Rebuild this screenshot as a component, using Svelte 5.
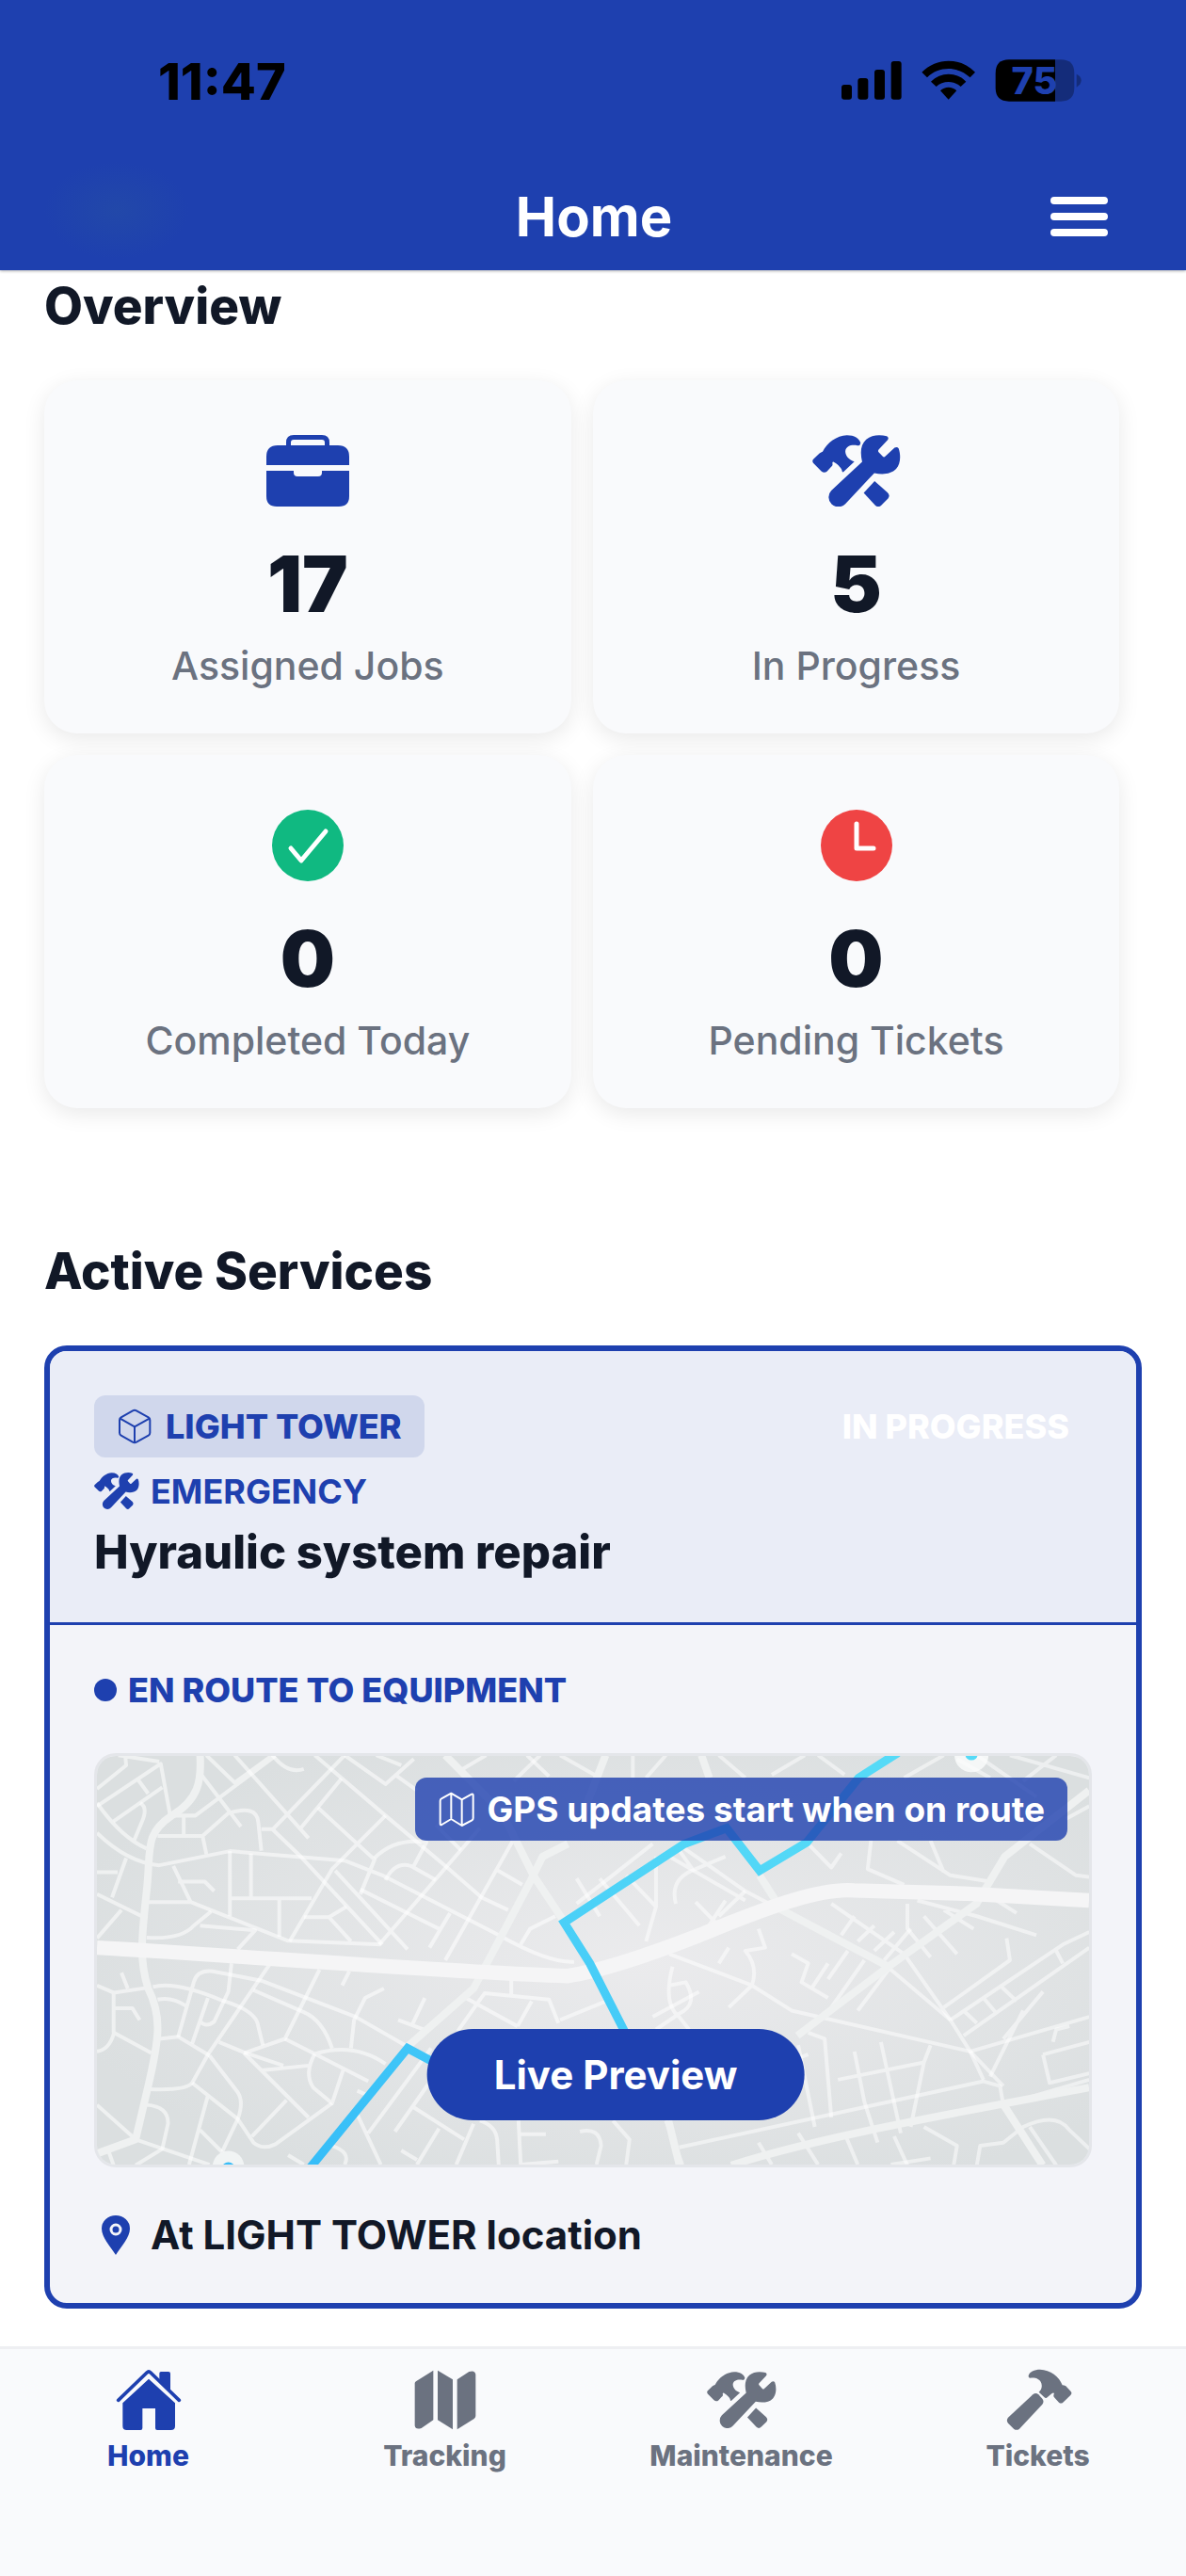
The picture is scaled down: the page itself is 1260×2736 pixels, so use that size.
<script>
  let activeTab = $state("Home");

  const stats = [
    { icon: "briefcase", value: 17, label: "Assigned Jobs" },
    { icon: "construct", value: 5, label: "In Progress" },
    { icon: "check", value: 0, label: "Completed Today" },
    { icon: "clock", value: 0, label: "Pending Tickets" }
  ];

  const tabs = [
    { icon: "home", label: "Home" },
    { icon: "map", label: "Tracking" },
    { icon: "construct", label: "Maintenance" },
    { icon: "hammer", label: "Tickets" }
  ];

  // side streets, west half
  const streetsWest = [
    "M42 155 L135 80 L132 48 M110 48 L240 68 M42 210 L245 75 L275 240 M170 122 L205 170 M95 258 L250 150",
    "M42 200 Q120 310 200 345 M180 200 Q205 215 185 260 L160 320 M42 295 Q140 390 240 398 L465 353 L830 383",
    "M390 48 L480 135 L600 48 M370 105 L500 275 M280 240 H355 L610 50 M318 240 V300 M235 305 H378 L460 232 Q550 205 555 260 L565 352 M378 305 L390 362",
    "M480 48 L715 312 M600 48 Q650 110 700 92 M600 285 L830 48 M690 280 L820 122 M565 283 H600 L690 370 L950 650",
    "M735 48 L960 240 L1150 400 L1265 500 L1350 540 M830 48 L960 140 L1050 60 M990 110 L1060 160 M930 48 L1010 80",
    "M745 215 L925 380 L880 490 M960 240 L790 410 L655 640 M830 383 L950 430 L1320 620 Q1480 710 1560 705",
    "M925 375 Q990 310 1090 325 L1050 400 M960 445 Q990 385 1040 400 L1120 445 M880 475 L1130 600 M1100 660 L1165 550",
    "M800 415 L1030 665 M940 650 L1260 280 M465 353 V560 M532 360 V500 M465 503 H725 M622 503 V625",
    "M700 563 H780 L835 530 M780 563 L850 640 M285 400 L340 515 M300 450 H385 L415 480 M205 515 H340 L650 638 L945 650",
    "M200 628 Q310 635 350 590 L405 545 M370 590 L545 605 L490 665 M42 490 L195 565 M42 630 L120 540 M42 420 H108 M90 500 L135 375",
    "M1365 320 L1150 700 M1310 410 L1395 460 M1390 650 L1420 600 L1500 560 M1200 350 L1120 270",
    "M42 780 L95 803 L200 788 M120 740 L140 790 M95 803 V930 L215 995 M95 853 H155 L178 890 M95 935 Q80 985 42 990",
    "M220 785 Q290 765 440 828 Q550 860 555 910 L570 970 M235 825 Q280 815 325 845 M300 945 L350 770 Q360 730 410 735 L565 765 L865 880 L1030 975",
    "M470 710 L460 800 L415 895 Q390 915 370 895 M345 965 L395 820 M590 715 L395 1000 L345 1090 Q325 1115 210 1110 M750 730 L640 950 L510 995",
    "M845 735 L822 780 M540 795 L700 865 Q760 890 790 980 M955 790 L895 820 L860 890 L850 980 M240 950 L300 943 L400 1003",
    "M400 1003 L490 1120 Q510 1150 490 1205 L440 1310 M430 960 L510 993 L635 1035 M640 950 L735 998 L905 1085 M735 998 Q860 960 960 1030",
    "M735 998 Q700 1060 730 1105 L790 1155 L825 1050 M565 1050 L715 1035 M510 995 L715 1200 M535 1260 L645 1145",
    "M345 1090 L490 1205 L540 1280 Q570 1305 610 1285 L790 1155 M395 1130 L335 1350 M370 1240 L440 1310 M200 1160 Q270 1165 268 1220 L250 1300 L165 1352",
    "M42 1160 L165 1270 L400 1350 M80 1310 L95 1352 M650 1320 L700 1350 M870 1115 L915 1135 M870 1190 L945 1350 M790 1290 Q850 1310 830 1350",
    "M1215 820 L1380 910 M1190 925 L1275 805 L1480 825 L1510 900 M1360 755 V810 M1380 910 L1425 830 M1085 820 L1045 905 M1000 890 L1080 920",
    "M1105 980 L905 1250 M1120 1060 L990 1245 M1045 1165 L1210 1270 M1130 1235 L1060 1350 M1240 1220 L1185 1350 M1010 1305 L1060 1335",
    "M1260 1210 Q1310 1225 1315 1270 L1320 1350 M1383 1210 L1390 1350 L1510 1340 M1390 1253 H1470 M1150 48 L1200 95 L1280 48 M1410 48 L1480 115"
  ];

  // side streets, east half, drawn on a wider grid
  const streetsEast = [
    "M690 48 L650 130 M720 48 L780 120 M830 48 V120 M880 48 L850 120 M960 48 L1000 120 M1040 110 L1090 48 M1110 48 L1150 110",
    "M1240 120 L1300 48 M1320 60 L1370 120 M1350 48 L1440 180 M1400 48 L1520 120 M1420 130 L1470 48 M1485 250 L1520 210",
    "M745 440 L780 560 M780 440 L840 590 M820 430 L865 530 L850 640 M865 530 V370 M895 520 Q885 440 925 410 L970 370 M905 340 L1000 480 L1045 530",
    "M885 370 L1000 510 M970 510 L945 590 M925 515 L955 580 M920 410 L900 350 M1000 480 L960 560 M860 330 L745 520",
    "M1095 330 L1130 405 L1145 360 M1190 320 L1185 410 L1240 460 M1230 320 L1310 430 L1370 450 M1280 320 L1300 420 M1430 330 L1500 430 L1520 435",
    "M1130 520 L1240 680 L1310 890 L1340 990 L1390 1100 M1165 560 L1145 620 M1195 590 L1170 640 M1225 610 L1195 670 M1250 600 L1210 700",
    "M1245 520 V600 L1280 690 M1270 560 L1320 680 M1300 540 L1345 600 M1260 510 L1350 560 L1440 620 M1380 510 L1410 550",
    "M885 680 L1010 780 L1070 860 L1340 990 L1520 880 M975 850 L1010 780 Q1020 720 1000 670 L1030 660 L1020 600 M975 660 L960 710",
    "M890 720 Q875 840 900 880 L915 920 M885 780 L910 770 Q930 840 900 870 L865 920 M1070 680 L1095 710 L1085 770 L1125 820 M1125 710 L1100 790",
    "M1155 670 L1125 760 M1180 700 L1130 850 M1220 720 L1170 860 M1220 730 L1310 890 M1300 850 L1400 700 L1395 630",
    "M1310 890 L1480 650 L1520 610 M1330 940 L1520 660 M1350 900 L1330 860 M1380 870 L1360 820 M1410 830 L1385 780 M1470 670 L1480 710",
    "M1370 1070 L1420 860 M1390 950 L1450 800 M1340 990 L1360 1080 M1450 1000 L1460 1090 L1520 1060 M1450 1000 L1520 960 M1465 960 L1470 920 L1490 910",
    "M1095 930 L1120 950 L1130 1200 M1080 970 L1105 1230 M1165 990 L1180 1150 L1200 1280 M1205 960 L1235 1250 M1140 1080 L1270 1025 L1250 1230 M1270 1025 L1280 970",
    "M900 1295 L1360 1085 L1385 1100 L1390 1160 M1015 1060 L1095 1000 M1390 1160 L1520 1080 M1270 1230 L1320 1290 L1315 1352 M1225 1260 L1245 1352",
    "M1350 1352 L1355 1290 L1390 1280 L1420 1230 Q1470 1180 1490 1240 L1520 1300 M1430 1230 L1470 1352 M750 1245 Q780 1230 782 1290 L775 1350 M800 1210 L825 1270 L820 1350",
    "M1020 1280 L1040 1350 M1080 1250 L1110 1350 M1150 1250 L1170 1350 M1220 1350 L1280 1330 M880 1210 L905 1350 M720 890 L790 830 M860 880 L930 800"
  ];
</script>

<style>
  :global(body) {
    margin: 0;
    background: #fff;
  }

  .app {
    font-family: Inter, "Liberation Sans", sans-serif;
    color: #111827;
    min-height: 100vh;
    display: flex;
    flex-direction: column;
  }

  h1, h2, h3 {
    margin: 0;
  }

  button {
    font-family: inherit;
    border: none;
    padding: 0;
    cursor: pointer;
  }

  svg {
    display: block;
    flex: none;
  }

  header {
    background: #1e40af;
    box-shadow: 0 1px 3px rgba(0, 0, 0, 0.3);
  }

  .status {
    height: 172px;
    padding: 0 110px 0 168px;
    display: flex;
    align-items: center;
    justify-content: space-between;
    color: #000;
    font-size: 54px;
    font-weight: 800;
  }

  .status-icons {
    width: 256px;
    height: 46px;
  }

  .titlebar {
    height: 115px;
    display: grid;
    grid-template-columns: 1fr auto 1fr;
    align-items: center;
    padding: 0 80px 0 47px;
  }

  .glow {
    width: 192px;
    height: 115px;
    background: radial-gradient(closest-side at 40% 45%, #2248a9, #1e40af);
  }

  h1 {
    color: #fff;
    font-size: 58px;
    line-height: 68px;
    font-weight: 700;
    padding-left: 35px;
  }

  .menu {
    justify-self: end;
    background: none;
  }

  main {
    flex: 1;
    padding: 7px 47px 39px;
  }

  h2 {
    font-size: 53px;
    line-height: 63px;
    font-weight: 800;
  }

  .stats {
    display: grid;
    grid-template-columns: 48% 48%;
    gap: 23px;
    padding: 47px 0 142px;
  }

  .stat {
    background: #f9fafc;
    border-radius: 35px;
    box-shadow: 0 6px 23px rgba(0, 0, 0, 0.09);
    padding: 49px 24px 47px;
    display: flex;
    flex-direction: column;
    align-items: center;
  }

  .stat .icon {
    height: 94px;
    display: flex;
    align-items: center;
    color: #1e40af;
  }

  .value {
    font-size: 82px;
    line-height: 98px;
    font-weight: 900;
    margin: 25px 0 12px;
  }

  .label {
    font-size: 41px;
    line-height: 50px;
    font-weight: 500;
    color: #6b7280;
  }

  .service {
    margin-top: 47px;
    border: 6px solid #1e40af;
    border-radius: 24px;
    background: #f3f4f9;
    overflow: hidden;
  }

  .service-head {
    background: #eaedf7;
    border-bottom: 3px solid #1e40af;
    padding: 47px 47px 45px;
  }

  .row {
    display: flex;
    align-items: center;
    justify-content: space-between;
  }

  .tag {
    display: flex;
    align-items: center;
    gap: 14px;
    height: 66px;
    padding: 0 24px;
    border-radius: 12px;
    background: #d0d7ec;
  }

  .tag,
  .state,
  .kind,
  .phase {
    font-size: 36px;
    line-height: 48px;
    font-weight: 700;
    color: #1e40af;
  }

  .tag,
  .state,
  .phase {
    font-weight: 800;
  }

  .state {
    color: #fff;
    padding-right: 24px;
  }

  .kind {
    display: flex;
    align-items: center;
    gap: 12px;
    margin: 12px 0;
  }

  h3 {
    font-size: 49px;
    line-height: 58px;
    font-weight: 800;
  }

  .service-body {
    padding: 45px 47px 42px;
  }

  .phase {
    display: flex;
    align-items: center;
    gap: 12px;
  }

  .dot {
    width: 24px;
    height: 24px;
    border-radius: 50%;
    background: #1e40af;
  }

  .map {
    position: relative;
    margin: 43px 0 42px;
    border: 3px solid #e4e6ea;
    border-radius: 23px;
    overflow: hidden;
  }

  .map > svg {
    width: 100%;
    height: 434px;
  }

  .gps {
    position: absolute;
    top: 23px;
    right: 23px;
    height: 67px;
    padding: 0 24px;
    display: flex;
    align-items: center;
    gap: 12px;
    border-radius: 12px;
    background: rgba(30, 64, 175, 0.8);
    color: #fff;
    font-size: 37px;
    font-weight: 700;
  }

  .preview {
    position: absolute;
    bottom: 47px;
    left: 50%;
    transform: translateX(-44%);
    height: 97px;
    padding: 0 71px;
    border-radius: 49px;
    background: #1e40af;
    color: #fff;
    font-size: 42px;
    font-weight: 700;
    white-space: nowrap;
  }

  .location {
    display: flex;
    align-items: center;
    gap: 12px;
    font-size: 42px;
    line-height: 60px;
    font-weight: 700;
  }

  nav {
    height: 222px;
    padding-top: 19px;
    border-top: 3px solid #eeeff2;
    background: #f9fafc;
    display: grid;
    grid-template-columns: repeat(4, 1fr);
    align-items: start;
  }

  .tab {
    display: flex;
    flex-direction: column;
    align-items: center;
    gap: 6px;
    background: none;
    color: #6b7280;
    font-size: 30px;
    line-height: 36px;
    font-weight: 800;
  }

  .tab.active {
    color: #1e40af;
  }

  .tab .icon {
    height: 70px;
    display: flex;
    align-items: center;
  }
</style>

{#snippet construct(width)}
  <svg {width} viewBox="127 94 284 232" fill="currentColor" aria-hidden="true">
    <path d="M287 180C280 150 282 125 300 108C318 93 345 92 366 98Q374 103 369 110L340 141Q337 145 340 149L353 163Q357 167 361 163L391 135Q399 130 404 137C412 160 410 188 396 203C380 220 352 222 326 216L233 315A31 31 0 0 1 188 272Z" />
    <path d="M327 242L368 278Q378 288 370 298L349 319Q339 329 329 320L292 280Z" />
    <path d="M160 148C175 118 205 97 238 95C262 95 278 105 282 120Q281 129 272 128C255 124 235 128 233 146C233 160 245 175 262 179L226 213Q222 213 222 207C220 198 203 184 195 180Q190 180 192 187Q193 193 187 197L174 211Q165 218 156 210L130 184Q125 177 131 171L150 153Q155 150 160 148Z" />
  </svg>
{/snippet}

{#snippet icon(name)}
  {#if name === "briefcase"}
    <svg width="94" height="94" viewBox="0 0 94 94" fill="currentColor" aria-hidden="true">
      <path d="M3 41V32Q3 20 15 20H24V17Q24 9 32 9H62Q70 9 70 17V20H79Q91 20 91 32V41ZM29 20H65V17Q65 14 62 14H32Q29 14 29 17Z" />
      <path d="M3 47H32V49Q32 53 36 53H58Q62 53 62 49V47H91V74Q91 85 80 85H14Q3 85 3 74Z" />
    </svg>
  {:else if name === "check"}
    <svg width="94" height="94" viewBox="0 0 94 94" aria-hidden="true">
      <circle cx="47" cy="47" r="38" fill="#10b981" />
      <path d="M29 50L40 63L66 32" fill="none" stroke="#fff" stroke-width="5" stroke-linecap="round" stroke-linejoin="round" />
    </svg>
  {:else if name === "clock"}
    <svg width="94" height="94" viewBox="0 0 94 94" aria-hidden="true">
      <circle cx="47" cy="47" r="38" fill="#ef4444" />
      <path d="M47 24V50H65" fill="none" stroke="#fff" stroke-width="5" stroke-linecap="round" stroke-linejoin="round" />
    </svg>
  {:else if name === "home"}
    <svg width="70" height="70" viewBox="98 42 210 210" fill="currentColor" aria-hidden="true">
      <path d="M106 148L197 60Q203 54 209 60L300 148" fill="none" stroke="currentColor" stroke-width="11" stroke-linecap="round" />
      <path d="M237 62Q237 57 242 57H266Q272 57 272 63V116L237 82Z" />
      <path d="M203 80L287 157V230Q287 243 274 243H230Q224 243 224 237V174H183V237Q183 243 177 243H133Q120 243 120 230V157Z" />
    </svg>
  {:else if name === "map"}
    <svg width="70" height="70" viewBox="1045 42 210 210" fill="currentColor" aria-hidden="true">
      <path d="M1053 94Q1053 90 1058 87L1112 53V211L1074 237Q1055 243 1053 229Z" />
      <path d="M1126 53L1174 82V241L1126 211Z" />
      <path d="M1188 82L1226 57Q1245 51 1247 66V198Q1247 203 1242 207L1188 241Z" />
    </svg>
  {:else if name === "hammer"}
    <svg width="70" height="70" viewBox="1102 42 210 210" fill="currentColor" overflow="visible" aria-hidden="true">
      <path d="M1176 70C1178 57 1195 50 1213 50C1245 51 1275 73 1284 100Q1290 100 1295 103L1311 120Q1316 126 1310 132L1285 156Q1279 160 1273 155L1258 139Q1254 134 1258 126Q1255 123 1250 127L1234 140Q1230 142 1226 138L1209 122C1222 112 1222 88 1205 80C1198 76 1190 76 1182 77Q1175 77 1176 70Z" />
      <path d="M1190 130Q1199 122 1208 130L1220 143Q1227 152 1220 161L1147 239Q1138 246 1129 239L1111 221Q1104 212 1111 203Z" />
    </svg>
  {/if}
{/snippet}

<div class="app">
  <header>
    <div class="status">
      <span>11:47</span>
      <svg class="status-icons" viewBox="104 66 768 138" aria-label="Battery 75 percent">
        <rect x="104" y="147" width="33" height="47" rx="9" />
        <rect x="156" y="126" width="33" height="68" rx="9" />
        <rect x="209" y="99" width="33" height="95" rx="9" />
        <rect x="262" y="72" width="33" height="122" rx="9" />
        <path d="M360 107C407 59 483 59 530 107L514 124C476 87 414 87 377 124Z" />
        <path d="M389 137C420 105 470 105 501 137L484 153C463 133 427 133 406 153Z" />
        <path d="M419 166C433 152 457 152 471 166L445 194Z" />
        <path d="M785 67H803Q846 67 846 110V157Q846 200 803 200H785Z" opacity="0.3" />
        <path d="M853 113Q868 120 868 133Q868 147 853 155Z" opacity="0.3" />
        <path d="M785 67H638Q595 67 595 110V157Q595 200 638 200H785Z" />
        <text x="719" y="177" text-anchor="middle" font-size="119" font-weight="800" fill="#1e40af">75</text>
      </svg>
    </div>
    <div class="titlebar">
      <div class="glow"></div>
      <h1>Home</h1>
      <button class="menu" aria-label="Menu">
        <svg width="64" height="46" viewBox="0 0 64 46" stroke="#fff" stroke-width="8" stroke-linecap="round">
          <path d="M4 6H57M4 23H57M4 40H57" />
        </svg>
      </button>
    </div>
  </header>

  <main>
    <h2>Overview</h2>
    <div class="stats">
      {#each stats as stat}
        <div class="stat">
          <div class="icon">
            {#if stat.icon === "construct"}
              {@render construct(94)}
            {:else}
              {@render icon(stat.icon)}
            {/if}
          </div>
          <div class="value">{stat.value}</div>
          <div class="label">{stat.label}</div>
        </div>
      {/each}
    </div>

    <h2>Active Services</h2>
    <article class="service">
      <div class="service-head">
        <div class="row">
          <span class="tag">
            <svg width="38" height="38" viewBox="133 78 114 114" fill="none" stroke="currentColor" stroke-width="6" stroke-linejoin="round" aria-hidden="true">
              <path d="M184 85Q190 82 196 85L234 106Q239 109 239 115V155Q239 161 234 164L196 185Q190 188 184 185L147 164Q142 161 142 155V115Q142 109 147 106ZM144 110L190 136L237 110M190 136V186" />
            </svg>
            LIGHT TOWER
          </span>
          <span class="state">IN PROGRESS</span>
        </div>
        <div class="kind">
          {@render construct(48)}
          EMERGENCY
        </div>
        <h3>Hyraulic system repair</h3>
      </div>

      <div class="service-body">
        <div class="phase"><span class="dot"></span>EN ROUTE TO EQUIPMENT</div>

        <div class="map">
          <svg viewBox="42 48 3156 1304" preserveAspectRatio="xMidYMid slice" fill="none" role="img" aria-label="Route map">
            <defs>
              <radialGradient id="land" cx="0.55" cy="0.5" r="0.6">
                <stop offset="0" stop-color="#ebebed" />
                <stop offset="1" stop-color="#dbdfe0" />
              </radialGradient>
              <linearGradient id="route" x1="0" y1="1" x2="0.5" y2="0">
                <stop offset="0" stop-color="#36bdf8" />
                <stop offset="1" stop-color="#55daf7" />
              </linearGradient>
            </defs>
            <rect x="42" y="48" width="3156" height="1304" fill="url(#land)" />
            <g stroke="#fff" stroke-opacity="0.55" stroke-width="12" stroke-linejoin="round">
              {#each streetsWest as d}
                <path {d} />
              {/each}
            </g>
            <g stroke="#fff" stroke-opacity="0.5" stroke-width="4" stroke-linejoin="round" transform="scale(2.1045 1)">
              {#each streetsEast as d}
                <path {d} vector-effect="non-scaling-stroke" />
              {/each}
            </g>
            <g stroke="#eff1f1" stroke-width="24" stroke-linejoin="round">
              <path d="M370 48C375 130 365 190 280 240C190 300 215 350 200 480C185 620 175 700 205 790C250 880 240 950 205 1100L165 1270L42 1315" />
              <path d="M1150 48L1330 230L1430 430L1530 580M1540 330L1460 370L1420 450L1240 790L1030 975M1660 48L1590 230" />
              <path d="M1965 48L1990 120M2150 430L2220 540L2560 720M2560 720L2840 520L2930 370L3198 160M2560 720L2270 940" />
              <path d="M1860 1210L1895 1352M2060 1352C2350 1260 2750 1190 3198 1105M2920 1150L3050 1352" />
            </g>
            <path d="M42 660C500 685 1100 735 1540 750C1640 735 1780 690 1960 620C2200 520 2350 470 2450 478L2800 488L3198 510" stroke="#f5f5f6" stroke-width="46" />
            <g fill="#fbfcfc">
              <circle cx="460" cy="1356" r="50" opacity="0.7" />
              <circle cx="2824" cy="48" r="54" opacity="0.8" />
            </g>
            <circle cx="460" cy="1362" r="20" fill="#36bdf8" />
            <circle cx="2824" cy="44" r="20" fill="#55daf7" />
            <path d="M720 1360L1030 980L1180 1060L1722 930L1610 710L1528 580L1910 330L2045 280L2150 415L2300 325L2465 120L2590 40" stroke="url(#route)" stroke-width="27" />
          </svg>
          <span class="gps">
            <svg width="40" height="40" viewBox="1103 160 120 120" fill="none" stroke="currentColor" stroke-width="6" stroke-linejoin="round" aria-hidden="true">
              <path d="M1111 192Q1111 187 1115 185L1146 168L1180 188L1211 171Q1216 169 1216 174V247Q1216 252 1212 254L1180 271L1146 250L1116 268Q1111 270 1111 265ZM1146 168V250M1180 188V271" />
            </svg>
            GPS updates start when on route
          </span>
          <button class="preview">Live Preview</button>
        </div>

        <div class="location">
          <svg width="48" height="42" viewBox="0 0 48 42" aria-hidden="true">
            <path d="M23 42C17 33 8 23 8 14A15 14 0 0 1 38 14C38 23 29 33 23 42Z" fill="#1e40af" />
            <circle cx="23" cy="15" r="5" fill="none" stroke="#f3f4f9" stroke-width="3" />
          </svg>
          At LIGHT TOWER location
        </div>
      </div>
    </article>
  </main>

  <nav>
    {#each tabs as tab}
      <button class="tab" class:active={activeTab === tab.label} onclick={() => (activeTab = tab.label)}>
        <span class="icon">
          {#if tab.icon === "construct"}
            {@render construct(74)}
          {:else}
            {@render icon(tab.icon)}
          {/if}
        </span>
        {tab.label}
      </button>
    {/each}
  </nav>
</div>
